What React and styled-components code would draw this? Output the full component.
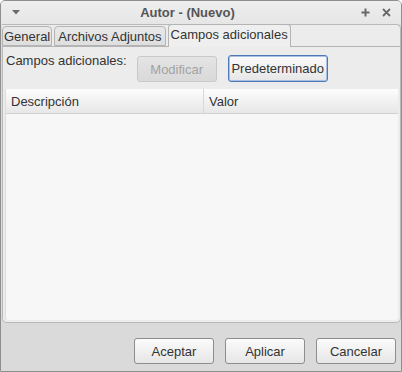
import React from "react";
import styled, { createGlobalStyle } from "styled-components";

const Global = createGlobalStyle`
  html, body { margin: 0; padding: 0; background: #ffffff; }
  body { font-family: "Liberation Sans", Arial, sans-serif; font-size: 13px; }
  * { box-sizing: border-box; }
`;

const Window = styled.div`
  width: 402px;
  height: 372px;
  display: flex;
  flex-direction: column;
  border: 1px solid #8f8f8f;
  border-radius: 5px 5px 0 0;
  background: #dadada;
  overflow: hidden;
`;

const TitleBar = styled.div`
  height: 23px;
  flex: none;
  display: flex;
  align-items: center;
  padding: 0 10px 0 11px;
  background: linear-gradient(#eeeeee, #e6e6e6);
  color: #555555;
`;

const Title = styled.div`
  flex: 1;
  text-align: center;
  font-weight: bold;
  font-size: 13px;
  padding-right: 6px;
`;

const TitleIcon = styled.svg`
  display: block;
  flex: none;
  margin-left: ${(p) => p.$gap || 0}px;
`;

const Body = styled.div`
  flex: 1;
  display: flex;
  flex-direction: column;
  padding: 0 0 0 1px;
`;

const TabBar = styled.div`
  height: 22px;
  display: flex;
  align-items: flex-end;
  gap: 2px;
  border-top: 1px solid #b9b9b9;
  border-right: 1px solid #b9b9b9;
  border-top-right-radius: 5px;
  background: #ececec;
  position: relative;
`;

const Tab = styled.div`
  height: ${(p) => (p.$active ? 23 : 20)}px;
  margin-bottom: ${(p) => (p.$active ? -1 : 0)}px;
  margin-top: ${(p) => (p.$active ? -1 : 0)}px;
  padding: 0 ${(p) => p.$pad}px;
  display: flex;
  align-items: ${(p) => (p.$active ? "flex-start" : "center")};
  padding-top: ${(p) => (p.$active ? 2 : 0)}px;
  border: 1px solid #b4b4b4;
  border-bottom: ${(p) => (p.$active ? "none" : "1px solid #b4b4b4")};
  border-radius: 4px 4px 0 0;
  background: ${(p) => (p.$active ? "#efefef" : "linear-gradient(#e9e9e9, #dedede)")};
  color: #333;
  font-size: 13px;
  white-space: nowrap;
  position: relative;
  z-index: ${(p) => (p.$active ? 2 : 1)};
`;

const Panel = styled.div`
  height: 277px;
  flex: none;
  display: flex;
  flex-direction: column;
  background: #ececec;
  border: 1px solid #b9b9b9;
  border-top: 1px solid #b4b4b4;
  border-radius: 0 0 5px 5px;
  padding: 6px 2px 2px 2px;
  position: relative;
  z-index: 1;
`;

const FieldRow = styled.div`
  display: flex;
  align-items: flex-start;
  height: 29px;
  margin-bottom: 7px;
`;

const FieldLabel = styled.span`
  color: #333;
  margin-left: 1px;
  line-height: 15px;
  margin-right: 10px;
`;

const Button = styled.button`
  font-family: "Liberation Sans", Arial, sans-serif;
  font-size: 13px;
  width: ${(p) => p.$w || 80}px;
  height: ${(p) => p.$h || 26}px;
  margin-left: ${(p) => p.$ml || 0}px;
  margin-top: ${(p) => p.$mt || 0}px;
  padding: 0;
  border-radius: 3px;
  border: 1px solid ${(p) => (p.$focus ? "#4f78b6" : p.disabled ? "#c9c9c9" : "#8d8d8d")};
  box-shadow: ${(p) => (p.$focus ? "inset 0 0 0 1px #a8c0e4" : "none")};
  background: ${(p) =>
    p.disabled ? "linear-gradient(#e4e4e4, #d9d9d9)" : "linear-gradient(#fbfbfb, #e6e6e6)"};
  color: ${(p) => (p.disabled ? "#a3a3a3" : "#333")};
  flex: none;
`;

const Table = styled.div`
  flex: 1;
  display: flex;
  flex-direction: column;
  background: #f7f7f7;
  border-left: 1px solid #dcdcdc;
  border-radius: 0 0 3px 3px;
`;

const HeaderRow = styled.div`
  height: 25px;
  display: flex;
  background: linear-gradient(#fdfdfd, #e7e7e7);
  border-bottom: 1px solid #d2d2d2;
`;

const HeaderCell = styled.div`
  width: ${(p) => (p.$w ? `${p.$w}px` : "auto")};
  flex: ${(p) => (p.$w ? "none" : 1)};
  display: flex;
  align-items: center;
  padding-left: 5px;
  color: #333;
  border-right: ${(p) => (p.$divider ? "1px solid #d8d8d8" : "none")};
`;

const Footer = styled.div`
  flex: 1;
  display: flex;
  justify-content: flex-end;
  align-items: flex-start;
  padding: 15px 5px 0 0;
  gap: 11px;
`;

export default function App() {
  return (
    <>
      <Global />
      <Window>
        <TitleBar>
          <TitleIcon width="8" height="5" viewBox="0 0 8 5">
            <path d="M0 0 H8 L4 4.5 Z" fill="#6a6a6a" />
          </TitleIcon>
          <Title>Autor - (Nuevo)</Title>
          <TitleIcon width="9" height="9" viewBox="0 0 9 9">
            <path d="M4.5 0.5 V8.5 M0.5 4.5 H8.5" stroke="#6a6a6a" strokeWidth="2" />
          </TitleIcon>
          <TitleIcon width="9" height="9" viewBox="0 0 9 9" $gap={12}>
            <path d="M1 1 L8 8 M8 1 L1 8" stroke="#6a6a6a" strokeWidth="1.8" />
          </TitleIcon>
        </TitleBar>
        <Body>
          <TabBar>
            <Tab $pad={1}>General</Tab>
            <Tab $pad={3}>Archivos Adjuntos</Tab>
            <Tab $pad={2} $active>Campos adicionales</Tab>
          </TabBar>
          <Panel>
            <FieldRow>
              <FieldLabel>Campos adicionales:</FieldLabel>
              <Button disabled $mt={3} $h={26}>Modificar</Button>
              <Button $focus $w={100} $h={27} $ml={11} $mt={2}>Predeterminado</Button>
            </FieldRow>
            <Table>
              <HeaderRow>
                <HeaderCell $w={198} $divider>Descripción</HeaderCell>
                <HeaderCell>Valor</HeaderCell>
              </HeaderRow>
            </Table>
          </Panel>
          <Footer>
            <Button>Aceptar</Button>
            <Button>Aplicar</Button>
            <Button>Cancelar</Button>
          </Footer>
        </Body>
      </Window>
    </>
  );
}
